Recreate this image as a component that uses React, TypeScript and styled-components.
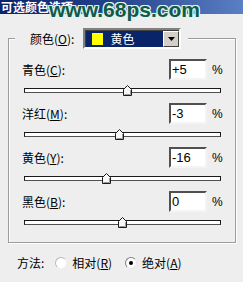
import styled, { createGlobalStyle } from 'styled-components';
import type { JSX } from 'react';

const GlobalStyle = createGlobalStyle`
  html, body {
    margin: 0;
    padding: 0;
    background: #eeeeee;
  }
  body {
    font-family: "Liberation Sans", "Noto Sans CJK SC", sans-serif;
    font-size: 12px;
    color: #000;
  }
`;

type Channel = { name: string; key: string; value: number };

const channels: Channel[] = [
  { name: '青色', key: 'C', value: 5 },
  { name: '洋红', key: 'M', value: -3 },
  { name: '黄色', key: 'Y', value: -16 },
  { name: '黑色', key: 'B', value: 0 },
];

const TRACK_WIDTH = 197;

const formatValue = (v: number): string => (v > 0 ? `+${v}` : `${v}`);

const SliderThumb = (): JSX.Element => (
  <svg width="9" height="11" viewBox="0 0 9 11">
    <polygon
      points="0.5,10.5 0.5,4.5 4.5,0.5 8.5,4.5 8.5,10.5"
      fill="#f7f7f7"
      stroke="#1a1a1a"
      strokeWidth="1"
    />
    <polyline points="7.5,5 7.5,9.5 1.5,9.5" fill="none" stroke="#9a9a9a" strokeWidth="1" />
  </svg>
);

const ArrowDown = (): JSX.Element => (
  <svg width="7" height="4" viewBox="0 0 7 4">
    <polygon points="0,0 7,0 3.5,4" fill="#000" />
  </svg>
);

export default function App(): JSX.Element {
  return (
    <>
      <GlobalStyle />
      <Window>
        <TitleBar>可选颜色选项</TitleBar>
        <Watermark>www.68ps.com</Watermark>

        <GroupBox>
          <Legend>
            <span>
              颜色(<Key>O</Key>):
            </span>
            <Dropdown>
              <Selected>
                <Swatch />
                <span>黄色</span>
              </Selected>
              <DropButton>
                <ArrowDown />
              </DropButton>
            </Dropdown>
          </Legend>

          <Controls>
            {channels.map((c) => (
              <Block key={c.key}>
                <Row>
                  <Label>
                    {c.name}(<Key>{c.key}</Key>):
                  </Label>
                  <ValueBox>{formatValue(c.value)}</ValueBox>
                  <Percent>%</Percent>
                </Row>
                <SliderArea>
                  <Track>
                    <Thumb $left={((c.value + 100) / 200) * TRACK_WIDTH - 1 - 4.5}>
                      <SliderThumb />
                    </Thumb>
                  </Track>
                </SliderArea>
              </Block>
            ))}
          </Controls>
        </GroupBox>

        <MethodRow>
          <MethodLabel>方法:</MethodLabel>
          <Option>
            <Radio $checked={false} />
            <span>
              相对(<Key>R</Key>)
            </span>
          </Option>
          <Option>
            <Radio $checked />
            <span>
              绝对(<Key>A</Key>)
            </span>
          </Option>
        </MethodRow>
      </Window>
    </>
  );
}

const Window = styled.div`
  position: relative;
  width: 243px;
  height: 282px;
  overflow: hidden;
  background: #eeeeee;
`;

const TitleBar = styled.div`
  height: 14px;
  padding-left: 1px;
  background: linear-gradient(90deg, #0a246a 0%, #23418a 45%, #5b7fc4 100%);
  color: #fff;
  font-family: "Noto Sans CJK SC", sans-serif;
  font-weight: bold;
  font-size: 12px;
  line-height: 14px;
  white-space: nowrap;
`;

const Watermark = styled.div`
  position: absolute;
  left: 49px;
  top: 0;
  font-family: "Liberation Sans", Arial, sans-serif;
  font-weight: bold;
  font-size: 21px;
  line-height: 19px;
  color: #0f5a4b;
  white-space: nowrap;
  text-shadow:
    1px 0 0 #dff4ec,
    -1px 0 0 #dff4ec,
    0 1px 0 #dff4ec,
    0 -1px 0 #dff4ec,
    1px 1px 0 #dff4ec,
    -1px -1px 0 #dff4ec,
    1px -1px 0 #dff4ec,
    -1px 1px 0 #dff4ec;
`;

const GroupBox = styled.div`
  margin: 24px 7px 0 8px;
  padding-bottom: 7px;
  border: 1px solid #9c9c9c;
  box-shadow: 1px 1px 0 #ffffff, inset 1px 1px 0 #ffffff;
`;

const Legend = styled.div`
  display: flex;
  align-items: center;
  gap: 9px;
  width: fit-content;
  height: 21px;
  margin: -11px 0 0 6px;
  padding: 0 7px 0 15px;
  background: #eeeeee;
  font-family: "Noto Sans CJK SC", sans-serif;
  line-height: 14px;
`;

const Key = styled.span`
  text-decoration: underline;
  text-underline-offset: 1px;
`;

const Dropdown = styled.div`
  display: flex;
  box-sizing: border-box;
  width: 98px;
  height: 21px;
  border: 2px solid;
  border-color: #808080 #ffffff #ffffff #808080;
  box-shadow: inset 1px 1px 0 #404040;
  background: #fff;
`;

const Selected = styled.div`
  flex: 1;
  display: flex;
  align-items: center;
  gap: 7px;
  margin: 1px 0 0 1px;
  padding-left: 6px;
  background: #0a246a;
  color: #fff;
  font-size: 12px;
`;

const Swatch = styled.div`
  width: 11px;
  height: 12px;
  background: #ffff00;
`;

const DropButton = styled.div`
  display: flex;
  align-items: center;
  justify-content: center;
  box-sizing: border-box;
  width: 16px;
  margin-top: 1px;
  background: #d4d0c8;
  border: 1px solid;
  border-color: #ffffff #404040 #404040 #ffffff;
`;

const Controls = styled.div`
  display: flex;
  flex-direction: column;
  margin-top: 10px;
`;

const Block = styled.div`
  display: flex;
  flex-direction: column;
  height: 44px;
`;

const Row = styled.div`
  display: flex;
  align-items: center;
  height: 21px;
  padding: 0 12px 0 13px;
`;

const Label = styled.span`
  flex: 1;
  font-family: "Noto Sans CJK SC", sans-serif;
  line-height: 14px;
`;

const ValueBox = styled.div`
  box-sizing: border-box;
  width: 38px;
  height: 21px;
  padding-left: 1px;
  background: #fff;
  border: 2px solid;
  border-color: #505050 #f4f4f4 #f4f4f4 #505050;
  font-family: "Liberation Sans", Arial, sans-serif;
  font-size: 13px;
  line-height: 17px;
`;

const Percent = styled.span`
  width: 11px;
  margin-left: 5px;
  font-family: "Liberation Sans", Arial, sans-serif;
  font-size: 12px;
`;

const SliderArea = styled.div`
  height: 23px;
  box-sizing: border-box;
  padding: 8px 13px 0 15px;
`;

const Track = styled.div`
  position: relative;
  box-sizing: border-box;
  width: ${TRACK_WIDTH}px;
  height: 5px;
  background: #ffffff;
  border: 1px solid #1a1a1a;
  border-bottom-color: #505050;
`;

const Thumb = styled.div<{ $left: number }>`
  position: absolute;
  top: -4px;
  left: ${(p): number => p.$left}px;
  width: 9px;
  height: 11px;
  line-height: 0;
`;

const MethodRow = styled.div`
  display: flex;
  align-items: center;
  height: 16px;
  margin-top: 12px;
  padding-left: 17px;
  font-family: "Noto Sans CJK SC", sans-serif;
  line-height: 14px;
`;

const MethodLabel = styled.span`
  margin-right: 11px;
`;

const Option = styled.label`
  display: flex;
  align-items: center;
  gap: 5px;
  margin-right: 13px;
`;

const Radio = styled.span<{ $checked: boolean }>`
  display: flex;
  align-items: center;
  justify-content: center;
  box-sizing: border-box;
  width: 12px;
  height: 12px;
  border-radius: 50%;
  background: #ffffff;
  border: 1px solid;
  border-color: ${(p): string =>
    p.$checked ? '#808080 #e8e8e8 #e8e8e8 #808080' : '#b8b8b8 #f2f2f2 #f2f2f2 #b8b8b8'};

  &::after {
    content: '';
    display: ${(p): string => (p.$checked ? 'block' : 'none')};
    width: 4px;
    height: 4px;
    border-radius: 50%;
    background: #000;
  }
`;
